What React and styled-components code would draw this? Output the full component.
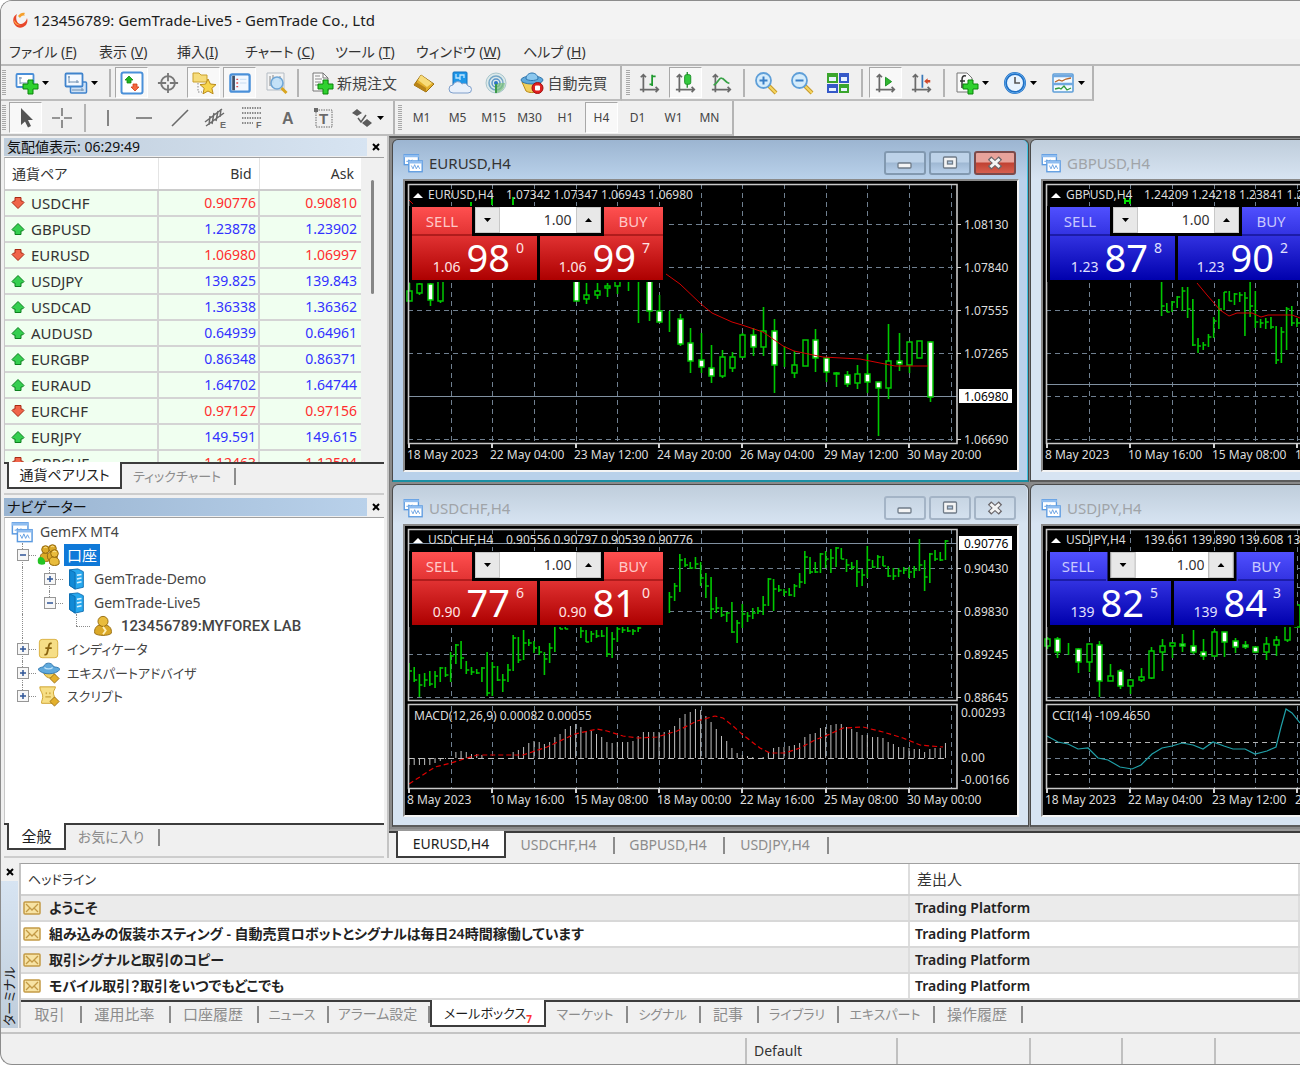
import React from 'react';
import styled, { createGlobalStyle } from 'styled-components';

const GlobalStyle = createGlobalStyle`
  *, *::before, *::after {
    box-sizing: border-box;
  }
  body {
    margin: 0;
    background: #fff;
    color: #333;
    font-family: 'Noto Sans', 'Noto Sans CJK JP', sans-serif;
    font-size: 14px;
    line-height: 20px;
    font-feature-settings: 'palt';
  }
  button, input {
    margin: 0;
    padding: 0;
    border: 0;
    background: none;
    color: inherit;
    font: inherit;
    font-feature-settings: inherit;
    white-space: nowrap;
  }
  svg {
    display: block;
    flex: none;
  }
`;

/* ---------- layout ---------- */

const AppWindow = styled.div`
  display: flex;
  flex-direction: column;
  min-height: 100vh;
  overflow: hidden;
  background: #f0f0f0;
  border: 1px solid #8c8c8c;
  border-right: 0;
  border-radius: 12px 0 0 12px;
`;

const TitleBar = styled.header`
  display: flex;
  align-items: center;
  gap: 4px;
  height: 38px;
  padding-left: 11px;
  background: #f3f3f3;
  color: #1c1c1c;
`;

const AppTitle = styled.h1`
  margin: 0;
  font-size: 15px;
  font-weight: 400;
`;

const MenuBar = styled.nav`
  display: flex;
  align-items: center;
  height: 27px;
  padding-left: 8px;
  border-bottom: 2px solid #b9b9b9;
`;

const MenuItem = styled.button`
  width: ${(p) => p.$w}px;
  text-align: left;
`;

const ToolRow = styled.div`
  display: flex;
  height: 35px;
`;

const ToolStrip = styled.div`
  display: flex;
  align-items: center;
  height: 35px;
  padding-left: ${(p) => p.$pad || 1}px;
  padding-right: ${(p) => p.$end || 0}px;
  border-right: 2px solid #b4b4b4;
  border-bottom: 2px solid #bdbdbd;
`;

const Grip = styled.span`
  width: 4px;
  height: 26px;
  margin-right: 2px;
  background: repeating-linear-gradient(#a8a8a8 0 1px, #f0f0f0 1px 2px);
`;

const Divider = styled.span`
  width: 2px;
  height: 28px;
  margin: 0 ${(p) => p.$m || 3}px;
  background: #b4b4b4;
`;

const ToolButton = styled.button`
  display: flex;
  align-items: center;
  justify-content: center;
  gap: 3px;
  width: ${(p) => (p.$w ? `${p.$w}px` : '33px')};
  height: 31px;
  margin: 0 2px 0 1px;
  color: #444;
  font-size: ${(p) => p.$size || 15}px;
  border: 1px solid;
  border-color: ${(p) => (p.$on ? '#a8a8a8 #fff #fff #a8a8a8' : 'transparent')};
  background: ${(p) => (p.$on ? '#f8f8f8' : 'transparent')};
`;

const Body = styled.main`
  display: flex;
`;

const Sidebar = styled.aside`
  display: flex;
  flex-direction: column;
  gap: 3px;
  flex: none;
  width: 388px;
  padding: 2px 3px 0 3px;
  border-right: 2px solid #c4c4c4;
`;

const Panel = styled.section`
  display: flex;
  flex-direction: column;
  flex: ${(p) => (p.$grow ? 1 : 'none')};
  padding-bottom: 3px;
  border-bottom: 2px solid #cdcdcd;
`;

const PanelHead = styled.div`
  display: flex;
  height: 19px;
`;

const PanelTitle = styled.h2`
  flex: 1;
  margin: 0;
  padding-left: 3px;
  height: 18px;
  font-size: 14px;
  font-weight: 400;
  line-height: 18px;
  color: #111;
  background: ${(p) =>
    p.$active
      ? 'linear-gradient(90deg, #99b4d1, #b9d1ea)'
      : 'linear-gradient(90deg, #bfcddb, #d7e4f2)'};
`;

const CloseButton = styled.button`
  display: flex;
  align-items: center;
  justify-content: center;
  width: 17px;
  height: 18px;
`;

/* ---------- market watch ---------- */

const WatchView = styled.div`
  display: flex;
  height: 305px;
  overflow: hidden;
  border-top: 1px solid #a0a0a0;
  border-left: 1px solid #c8c8c8;
`;

const WatchTable = styled.table`
  width: 356px;
  table-layout: fixed;
  border-collapse: collapse;
  font-size: 15px;
`;

const WatchHead = styled.th`
  width: ${(p) => (p.$w ? `${p.$w}px` : 'auto')};
  height: 32px;
  padding: 0 7px;
  background: #fff;
  border-right: 1px solid #e4e4e4;
  border-bottom: 2px solid #ccc;
  font-size: 14px;
  font-weight: 400;
  text-align: ${(p) => (p.$right ? 'right' : 'left')};
  &:last-child {
    border-right: 0;
  }
`;

const Pair = styled.td`
  height: 26px;
  padding: 0 0 0 6px;
  background: #f0fff0;
  border-right: 2px solid #d4d4d4;
  border-bottom: 2px solid #d4d4d4;
`;

const PairLabel = styled.span`
  display: flex;
  align-items: center;
  gap: 6px;
`;

const Quote = styled(Pair)`
  padding: 0 2px;
  text-align: right;
  font-size: 14px;
  color: ${(p) => (p.$up ? '#3232ff' : '#ff2e2e')};
  &:last-child {
    padding-right: 4px;
    border-right: 0;
  }
`;

const ScrollTrack = styled.div`
  flex: 1;
  display: flex;
  justify-content: center;
  padding-top: 22px;
`;

const ScrollThumb = styled.div`
  width: 3px;
  height: 114px;
  border-radius: 2px;
  background: #868686;
`;

/* ---------- tabs ---------- */

const TabBar = styled.div`
  display: flex;
  height: ${(p) => p.$h || 28}px;
  padding-left: ${(p) => p.$pad || 0}px;
  border-top: 2px solid #3c3c3c;
`;

const Tab = styled.button`
  position: relative;
  display: flex;
  align-items: center;
  justify-content: center;
  width: ${(p) => p.$w}px;
  height: 23px;
  padding-right: 4px;
  font-size: ${(p) => p.$size || 14}px;
  color: #8c8c8c;
  &::after {
    content: '';
    position: absolute;
    right: 0;
    top: 4px;
    height: 17px;
    border-right: 2px solid #8c8c8c;
  }
`;

const ActiveTab = styled(Tab)`
  height: 27px;
  margin-top: -2px;
  padding-right: 0;
  color: #1c1c1c;
  background: #fff;
  border: solid #3c3c3c;
  border-width: 0 2px 2px 2px;
  &::after {
    display: none;
  }
`;

const Badge = styled.sub`
  align-self: flex-end;
  font-size: 10px;
  font-weight: 700;
  line-height: 12px;
  color: #f33;
`;

/* ---------- navigator ---------- */

const TreeView = styled.div`
  flex: 1;
  padding: 2px 0 0 4px;
  background: #fff;
  border-top: 1px solid #a0a0a0;
  border-left: 1px solid #c8c8c8;
`;

const TreeList = styled.ul`
  display: grid;
  grid-auto-rows: 1fr;
  height: 188px;
  margin: 0;
  padding: 0;
  list-style: none;
`;

const TreeRow = styled.li`
  display: flex;
  align-items: stretch;
`;

const Guide = styled.span`
  position: relative;
  display: flex;
  align-items: center;
  justify-content: center;
  width: 27px;
  &::before {
    content: '';
    position: absolute;
    left: 13px;
    top: 0;
    bottom: ${(p) => (p.$end ? '50%' : '0')};
    border-left: 1px dotted ${(p) => (p.$line ? '#8c8c8c' : 'transparent')};
  }
  &::after {
    content: '';
    position: absolute;
    left: 13px;
    right: 0;
    top: 50%;
    border-top: 1px dotted ${(p) => (p.$branch ? '#8c8c8c' : 'transparent')};
  }
`;

const Expander = styled.button`
  position: relative;
  z-index: 1;
  display: flex;
  align-items: center;
  justify-content: center;
  width: 12px;
  height: 12px;
  background: #f7f7f7;
  border: 1px solid #969696;
`;

const TreeIcon = styled.span`
  display: flex;
  align-items: center;
  justify-content: center;
  width: 26px;
  margin-right: 2px;
`;

const TreeLabel = styled.span`
  align-self: center;
  padding: 0 3px;
  font-size: ${(p) => p.$size || 14}px;
  line-height: 22px;
  color: ${(p) => (p.$on ? '#fff' : '#444')};
  background: ${(p) => (p.$on ? '#0f79d8' : 'transparent')};
`;

const LoginLabel = styled(TreeLabel)`
  font-family: Roboto, sans-serif;
  font-size: 15px;
  font-weight: 500;
`;

/* ---------- chart windows ---------- */

const Workspace = styled.section`
  flex: 1;
  min-width: 0;
  display: flex;
  flex-direction: column;
`;

const Desktop = styled.div`
  display: grid;
  grid-template-columns: 637px 637px;
  grid-template-rows: 343px 343px;
  gap: 2px 1px;
  height: 695px;
  padding: 1px 0 0 2px;
  overflow: hidden;
  background: #8a8a8a;
  border-top: 2px solid #555;
  border-left: 1px solid #777;
  border-bottom: 2px solid #999;
`;

const ChartFrame = styled.article`
  display: flex;
  flex-direction: column;
  padding: 0 9px 0 10px;
  border: 1px solid #4a4a4a;
  border-bottom: 2px solid ${(p) => (p.$active ? '#1b8fa3' : '#5c5c5c')};
  border-radius: 6px 6px 0 0;
  background: ${(p) =>
    p.$active
      ? 'linear-gradient(#9cb5d1, #b9d1ea 39px)'
      : 'linear-gradient(#bfcddb, #d7e4f2 39px)'};
  box-shadow: inset -1px 0 ${(p) => (p.$active ? '#3fc4e0' : '#d7e4f2')};
`;

const ChartHead = styled.header`
  display: flex;
  align-items: center;
  gap: 3px;
  height: 39px;
  padding: 7px 3px 0 0;
`;

const ChartTitle = styled.h2`
  flex: 1;
  margin: 0 0 0 3px;
  font-size: 15px;
  font-weight: 400;
  color: ${(p) => (p.$active ? '#333' : '#a0a4a8')};
`;

const FrameButton = styled.button`
  display: flex;
  align-items: center;
  justify-content: center;
  width: 42px;
  height: 24px;
  border: 2px solid ${(p) => (p.$close ? '#7c4a4a' : p.$active ? '#8299b0' : '#a4b4c6')};
  border-radius: 3px;
  background: ${(p) =>
    p.$close
      ? 'linear-gradient(#e8a39b 0 45%, #c04132 50%, #d6604f)'
      : p.$active
        ? 'linear-gradient(#bdd2e8 0 45%, #9fb8d3 50%, #b7cfe9)'
        : 'transparent'};
`;

const Plot = styled.div`
  position: relative;
  border: 2px solid;
  border-color: #8a8a8a #f4f4f4 #f4f4f4 #8a8a8a;
  background: #000;
`;

const ChartSvg = styled.svg`
  width: 612px;
  height: 289px;
  font-family: 'Noto Sans', sans-serif;
  font-size: 12px;
  fill: #dcdcdc;
`;

const TradePanel = styled.div`
  position: absolute;
  left: 4px;
  top: 25px;
  display: grid;
  grid-template-columns: ${(p) => (p.$narrow ? '121px 120px' : '125px 123px')};
  gap: 3px;
  padding: 1px 3px 2px;
  background: #000;
`;

const redFill = 'linear-gradient(#ff5050, #e23333 38%, #ad0000)';
const blueFill = 'linear-gradient(#5050ff, #3333e2 38%, #0000ad)';

const DealButton = styled.button`
  display: flex;
  flex-direction: column;
  align-items: ${(p) => (p.$buy ? 'flex-end' : 'flex-start')};
  height: 73px;
  color: #fff;
  background: ${(p) => (p.$blue ? blueFill : redFill)};
`;

const DealSide = styled.span`
  width: ${(p) => (p.$narrow ? 56 : 60)}px;
  height: 29px;
  font-size: 15px;
  line-height: 28px;
  text-align: center;
  color: ${(p) => (p.$blue ? '#c8c8ff' : '#ffc8c8')};
  border-bottom: 2px solid ${(p) => (p.$blue ? '#1c1ca8' : '#b01c1c')};
`;

const DealPrice = styled.span`
  align-self: flex-end;
  display: flex;
  align-items: baseline;
  gap: 6px;
  padding-right: 13px;
  font-size: 14px;
  line-height: 42px;
  color: ${(p) => (p.$blue ? '#e0e0ff' : '#ffe4e4')};
`;

const BigDigits = styled.span`
  font-size: 38px;
  color: #fff;
`;

const Pip = styled.span`
  align-self: flex-start;
  line-height: 24px;
`;

const Volume = styled.div`
  position: absolute;
  top: 0;
  left: 50%;
  transform: translateX(-50%);
  display: flex;
  height: 30px;
  padding: 1px 3px 3px;
  background: #000;
`;

const Spin = styled.button`
  width: 25px;
  color: #111;
  background: #e8e8e8;
  border: 1px solid #c8c8c8;
  display: flex;
  align-items: center;
  justify-content: center;
`;

const VolumeInput = styled.input`
  width: ${(p) => (p.$narrow ? 73 : 76)}px;
  padding-right: 4px;
  background: #fff;
  color: #333;
  text-align: right;
`;

/* ---------- terminal ---------- */

const Terminal = styled.section`
  display: flex;
  margin-top: 5px;
  border-bottom: 2px solid #c4c4c4;
  padding-bottom: 4px;
`;

const TerminalSide = styled.div`
  display: flex;
  flex-direction: column;
  flex: none;
  width: 18px;
`;

const SideTitle = styled.h2`
  display: flex;
  align-items: center;
  flex: 1;
  width: 17px;
  margin: 0;
  padding-top: 2px;
  writing-mode: vertical-rl;
  text-orientation: sideways;
  transform: rotate(180deg);
  font-size: 13px;
  font-weight: 400;
  line-height: 17px;
  color: #222;
  background: linear-gradient(#bfcddb, #d7e4f2);
`;

const TerminalMain = styled.div`
  flex: 1;
  min-width: 0;
  border-top: 1px solid #a0a0a0;
  border-left: 2px solid #c4c4c4;
`;

const MailTable = styled.table`
  width: 100%;
  table-layout: fixed;
  border-collapse: collapse;
`;

const MailHead = styled.th`
  width: ${(p) => (p.$w ? p.$w : 'auto')};
  height: 31px;
  padding: 0 7px;
  background: #fff;
  border-right: 2px solid #ddd;
  border-bottom: 2px solid #d0d0d0;
  font-size: ${(p) => p.$size}px;
  font-weight: 400;
  text-align: left;
`;

const MailRow = styled.tr`
  background: ${(p) => (p.$odd ? '#fff' : '#ebebeb')};
`;

const MailCell = styled.td`
  height: 26px;
  padding: 0 0 0 ${(p) => p.$pad}px;
  border-right: 2px solid #ddd;
  border-bottom: 2px solid #d8d8d8;
  font-weight: 600;
  color: #222;
  white-space: nowrap;
`;

const Subject = styled.span`
  display: flex;
  align-items: center;
  gap: 8px;
`;

const StatusBar = styled.footer`
  display: flex;
  flex: 1;
  min-height: 29px;
  padding-top: 4px;
`;

const StatusCell = styled.span`
  flex: ${(p) => (p.$w ? `0 0 ${p.$w}` : 1)};
  padding: 3px 7px;
  border-right: ${(p) => (p.$w ? '2px solid #c0c0c0' : '0')};
`;

/* ---------- icons ---------- */

const Icon = ({ size = 24, children }) => (
  <svg width={size} height={size} viewBox="0 0 24 24" fill="none" aria-hidden="true">
    {children}
  </svg>
);

const Caret = () => (
  <svg width="7" height="4" viewBox="0 0 7 4" aria-hidden="true">
    <path d="M0 0h7L3.500 4z" fill="#000" />
  </svg>
);

const CrossMark = () => (
  <svg width="8" height="8" viewBox="0 0 8 8" aria-hidden="true">
    <path d="M1 1l6 6M7 1L1 7" stroke="#000" strokeWidth="2" />
  </svg>
);

const Plus = () => (
  <path
    d="M13 9h5v4h5v5h-5v5h-5v-5H8v-5h5z"
    fill="#2fd12f"
    stroke="#0b850b"
    strokeWidth="1"
  />
);

const LogoIcon = () => (
  <svg width="17" height="17" viewBox="0 0 17 17" aria-hidden="true">
    <path d="M5 2C1 4 0 9 3 13c3 4 8 3 11 0 1-2 2-4 1-7-1 4-4 6-7 6C5 11 3 7 5 2z" fill="#e8472b" />
    <path d="M6 4c2-3 5-4 7-3-1 1-1 2 0 3-2-1-4 0-5 2z" fill="#f6a02c" />
    <path d="M2 8c0 4 4 6 7 5-3 0-5-2-7-5z" fill="#ffb347" />
  </svg>
);

const WindowsIcon = ({ size = 20 }) => (
  <Icon size={size}>
    <rect x="1.500" y="2" width="17" height="12" fill="#fff" stroke="#5b9ae0" strokeWidth="1.600" />
    <path d="M1 3.500h18" stroke="#8fbdf0" strokeWidth="3" />
    <path d="M4 10h2l1-2 2 3 2-3" stroke="#5b9ae0" />
    <rect x="7" y="9.500" width="16" height="13" fill="#fff" stroke="#5b9ae0" strokeWidth="1.600" />
    <path d="M7 11h16" stroke="#8fbdf0" strokeWidth="3" />
    <path d="M10 15l2 4 2-5 2 5 2-4 2 4" stroke="#5b9ae0" />
  </Icon>
);

const NewChartIcon = () => (
  <Icon>
    <rect x="1.500" y="3" width="17" height="13" rx="1" fill="#fff" stroke="#4a8fd8" strokeWidth="1.800" />
    <path d="M5 6v7M4 7h3M5 12h9l-2-1.500" stroke="#6f8fb0" />
    <Plus />
  </Icon>
);

const ProfilesIcon = () => (
  <Icon>
    <rect x="6.500" y="11" width="16" height="11" rx="1" fill="#cfe2f6" stroke="#3f83cc" strokeWidth="1.500" />
    <rect x="1.500" y="2.500" width="17" height="13" rx="1" fill="#f4f9ff" stroke="#3f83cc" strokeWidth="1.800" />
    <path d="M5 5v7M4 6h2M5 11h10M13 9v3" stroke="#6f8fb0" />
    <path d="M8 19h12M18 17v3" stroke="#6f8fb0" />
  </Icon>
);

const WatchIcon = () => (
  <Icon>
    <rect x="1.500" y="1.500" width="21" height="21" rx="2" fill="#fff" stroke="#4a90d9" strokeWidth="2" />
    <path d="M9 5l4 4h-2v3H7V9H5z" fill="#21b321" stroke="#118a11" strokeWidth=".8" />
    <path d="M15 20l-4-4h2v-3h4v3h2z" fill="#f4683f" stroke="#d23a14" strokeWidth=".8" />
  </Icon>
);

const TargetIcon = () => (
  <Icon size={22}>
    <circle cx="12" cy="12" r="7.500" stroke="#777" strokeWidth="2" />
    <path d="M12 1v9M12 14v9M1 12h9M14 12h9" stroke="#777" strokeWidth="2" />
  </Icon>
);

const StarFolderIcon = () => (
  <Icon>
    <path d="M1 2h6l2 2h6v7H1z" fill="#f6dc7c" stroke="#c9a02c" />
    <path d="M6 12v9h4" stroke="#888" strokeDasharray="1.500 1.500" />
    <path d="M16 8l2.400 5 5.600.6-4.100 3.700 1.200 5.500L16 20l-5 2.800 1.200-5.500L8 13.600l5.600-.6z" fill="#f7d54d" stroke="#b98a18" />
  </Icon>
);

const PanelIcon = () => (
  <Icon size={22}>
    <rect x="1.500" y="2.500" width="21" height="19" rx="2" fill="#f2f8ff" stroke="#4a90d9" strokeWidth="2.500" />
    <path d="M5 4v16" stroke="#3f4f66" strokeWidth="3" />
    <path d="M8 8h2M8 12h2M8 16h2" stroke="#e05050" strokeWidth="1.500" />
    <path d="M12 8h7M12 12h7" stroke="#c5daf0" />
  </Icon>
);

const TesterIcon = () => (
  <Icon>
    <path d="M3 2h17v17H3z" fill="#f4f4f4" stroke="#b4bcc4" />
    <path d="M6 5v10M9 4v8M16 5v6" stroke="#888" />
    <circle cx="13" cy="12" r="6" fill="#bfe0f8" fillOpacity=".9" stroke="#6fa6d6" strokeWidth="1.600" />
    <path d="M17.500 17l5 5" stroke="#d9a520" strokeWidth="3" />
  </Icon>
);

const OrderIcon = () => (
  <Icon>
    <path d="M3 2h10l5 5v13H3z" fill="#fafafa" stroke="#777" />
    <path d="M13 2v5h5" stroke="#777" />
    <path d="M5 5h5M5 8h7M5 11h6M5 14h4" stroke="#888" />
    <Plus />
  </Icon>
);

const GoldIcon = () => (
  <Icon>
    <path d="M9 4l13 9-8 8L2 14z" fill="#e3b02c" stroke="#9c6f10" />
    <path d="M9 4l11 8-5 4L6 9z" fill="#f8dc7a" />
    <path d="M2 14l12 7v-4L4 11z" fill="#b98418" />
  </Icon>
);

const CloudIcon = () => (
  <Icon>
    <rect x="5" y="1" width="14" height="16" rx="1" fill="#1f97e8" stroke="#1471bd" />
    <path d="M8 3v4h4M12 9V4h4v3" stroke="#bfe6ff" strokeWidth="1.300" />
    <path d="M5 22a4 4 0 010-8 5 5 0 019-1 4 4 0 016 2 3.500 3.500 0 010 7z" fill="#e9f0fa" stroke="#7f9fcb" />
  </Icon>
);

const SignalIcon = () => (
  <Icon>
    <circle cx="12" cy="12" r="10" fill="#dce9ea" stroke="#a9c6cc" />
    <circle cx="12" cy="12" r="7" stroke="#74a6c6" strokeWidth="1.500" />
    <circle cx="12" cy="12" r="4" stroke="#5c96cc" strokeWidth="1.500" />
    <path d="M12 12v10a10 10 0 009-10z" fill="#7cc07c" fillOpacity=".7" />
    <circle cx="12" cy="12" r="2" fill="#2d74c4" />
    <path d="M12 13v9" stroke="#3d9a4a" strokeWidth="2" />
  </Icon>
);

const RobotIcon = () => (
  <Icon>
    <path d="M2 11l4 9c3 2 8 2 11 0l4-9z" fill="#f2cf5c" stroke="#b98a18" />
    <ellipse cx="12" cy="9" rx="11" ry="4" fill="#5fa9dc" stroke="#2f75ad" />
    <path d="M6 8c0-8 12-8 12 0-3 2-9 2-12 0z" fill="#8cc8ee" stroke="#2f75ad" />
    <circle cx="17.500" cy="17" r="5.500" fill="#e02020" stroke="#a01010" />
    <rect x="15" y="14.500" width="5" height="5" rx="1" fill="#fff" />
  </Icon>
);

const Axes = () => (
  <path d="M5 3v20M1 20h21M2 6l3-3 3 3M19 17l3 3-3 3" stroke="#6a6a6a" strokeWidth="2" />
);

const BarsIcon = () => (
  <Icon size={21}>
    <Axes />
    <path d="M15 3v13M15 5h4M12 14h3" stroke="#1f9a2f" strokeWidth="2" />
  </Icon>
);

const CandleIcon = () => (
  <Icon size={21}>
    <Axes />
    <path d="M14 0v18" stroke="#1f8a2a" strokeWidth="1.500" />
    <rect x="11" y="3" width="7" height="11" rx="2" fill="#35c93f" stroke="#148a20" />
  </Icon>
);

const LineIcon = () => (
  <Icon size={21}>
    <Axes />
    <path d="M3 15c5-2 6-9 9-8 3 0 4 5 9 6" stroke="#3aa348" strokeWidth="2" />
  </Icon>
);

const ZoomIcon = ({ plus }) => (
  <Icon>
    <path d="M15 15l7 7" stroke="#c79a2a" strokeWidth="4" />
    <path d="M15 15l7 7" stroke="#f6d661" strokeWidth="2" />
    <circle cx="9.500" cy="9.500" r="7.500" fill="#d5ecfb" stroke="#5f9fd8" strokeWidth="1.800" />
    <path d={plus ? 'M5.500 9.500h8M9.500 5.500v8' : 'M5.500 9.500h8'} stroke="#3a7fc6" strokeWidth="2" />
  </Icon>
);

const TileIcon = () => (
  <Icon>
    <path d="M1 2h11v10H1zM13 13h10v9H13z" fill="#3aa52c" />
    <path d="M13 2h10v10H13zM1 13h11v9H1z" fill="#3558c8" />
    <path d="M3 6h7v4H3zM15 6h6v4h-6zM3 17h7v3H3zM15 17h6v3h-6z" fill="#e8f2ff" />
  </Icon>
);

const ScrollIcon = () => (
  <Icon size={21}>
    <Axes />
    <path d="M12 6l7 5-7 5z" fill="#2fb62f" stroke="#168a20" />
  </Icon>
);

const ShiftIcon = () => (
  <Icon size={21}>
    <Axes />
    <path d="M13 3v15" stroke="#3a78b8" strokeWidth="2" />
    <path d="M15 10.500l4-3.500v2h3v3h-3v2z" fill="#d0482a" />
  </Icon>
);

const IndicatorIcon = () => (
  <Icon>
    <path d="M2 2h10l5 5v14H2z" fill="#fafafa" stroke="#777" />
    <path d="M11 5c-3-1-4 1-4 4v8M5 10h5" stroke="#333" strokeWidth="1.500" />
    <Plus />
  </Icon>
);

const ClockIcon = () => (
  <Icon>
    <circle cx="12" cy="12" r="9.500" fill="#e8f4ff" stroke="#1f6fc4" strokeWidth="3" />
    <circle cx="12" cy="12" r="10" stroke="#5fa8ea" strokeWidth="1" />
    <path d="M12 6v6h5" stroke="#555" strokeWidth="1.600" />
  </Icon>
);

const TemplateIcon = () => (
  <Icon>
    <rect x="2" y="3" width="20" height="18" rx="1" fill="#f4faff" stroke="#5f9fd8" strokeWidth="1.600" />
    <path d="M2 5h20M2 13h20" stroke="#6fa8e0" strokeWidth="2.500" />
    <path d="M4 11l4-2 3 1 4-2 5-1" stroke="#b8652a" strokeWidth="1.300" />
    <path d="M4 18l4-1 2 1 3-3 3 4 4-2" stroke="#2f9a3a" strokeWidth="1.300" />
  </Icon>
);

const PointerIcon = () => (
  <Icon>
    <path d="M7 2v17l4-3.500 3 6 3-1.500-3-6h5z" fill="#555" />
  </Icon>
);

const CrosshairIcon = () => (
  <Icon>
    <path d="M12 2v8M12 14v8M2 12h8M14 12h8" stroke="#777" strokeWidth="1.600" />
  </Icon>
);

const StrokeIcon = ({ d }) => (
  <Icon>
    <path d={d} stroke="#6a6a6a" strokeWidth="1.600" />
  </Icon>
);

const ToolLetter = styled.text`
  font-family: 'Liberation Sans', sans-serif;
  font-weight: 700;
  font-size: ${(p) => p.$size}px;
  fill: #6a6a6a;
`;

const ChannelIcon = () => (
  <Icon>
    <path d="M1 16L18 3M2 20L20 7M6 10l-1 9M10 7l-2 11M14 5l-2 10M17 3l-1 8" stroke="#6a6a6a" strokeWidth="1.500" />
    <ToolLetter x="16" y="22" $size={9}>E</ToolLetter>
  </Icon>
);

const FiboIcon = () => (
  <Icon>
    <path d="M2 2h20M2 7h20M2 12h20M2 17h11" stroke="#6a6a6a" strokeWidth="1.500" strokeDasharray="1.500 1" />
    <ToolLetter x="16" y="22" $size={9}>F</ToolLetter>
  </Icon>
);

const TextIcon = () => (
  <Icon>
    <ToolLetter x="6" y="18" $size={16}>A</ToolLetter>
  </Icon>
);

const LabelIcon = () => (
  <Icon>
    <rect x="4" y="4" width="16" height="17" stroke="#6a6a6a" strokeDasharray="1.500 1" />
    <path d="M2 2h4v4H2z" fill="#6a6a6a" />
    <ToolLetter x="7" y="18" $size={15}>T</ToolLetter>
  </Icon>
);

const ArrowsIcon = () => (
  <Icon>
    <path d="M7 3l5 4-5 3-5-3zM17 13l5 4-5 4-5-4z" fill="#5c5c5c" />
    <path d="M8 12l3 4 5-7" stroke="#5c5c5c" strokeWidth="1.500" />
  </Icon>
);

const TrendArrow = ({ up }) => (
  <svg width="14" height="14" viewBox="0 0 14 14" aria-hidden="true">
    {up ? (
      <path d="M7 1.500l6 6-1.500 1.500H10v3.500H4V9H2.500L1 7.500z" fill="#35cf50" stroke="#0c7f1e" />
    ) : (
      <path d="M7 12.500l6-6L11.500 5H10V1.500H4V5H2.500L1 6.500z" fill="#f0654a" stroke="#a82a14" />
    )}
  </svg>
);

const MailIcon = () => (
  <svg width="18" height="14" viewBox="0 0 18 14" aria-hidden="true">
    <rect x="1" y="1" width="16" height="12" rx="1" fill="#f7e3a4" stroke="#c39a45" strokeWidth="1.500" />
    <path d="M3 3l6 6 6-6M3 11l4-4M15 11l-4-4" fill="none" stroke="#c39a45" strokeWidth="1.300" />
  </svg>
);

const PersonShape = ({ x = 0, y = 0, fill = '#dba928' }) => (
  <g transform={`translate(${x} ${y})`}>
    <path d="M4 16c-2-5 1-7 3-7 4 0 7 2 6 7-2 2-7 2-9 0z" fill={fill} stroke="#94690c" />
    <circle cx="8.500" cy="5.500" r="3.800" fill={fill} stroke="#94690c" />
    <path d="M7 4c1-1 2-1 3 0" stroke="#ffeaa0" />
  </g>
);

const AccountsIcon = () => (
  <Icon>
    <PersonShape x={0} y={1} />
    <path d="M1 20c-1-5 1-6 3-6s5 3 4 7c-2 1-6 1-7-1z" fill="#24c324" />
    <PersonShape x={7} y={0} />
    <PersonShape x={9} y={5} fill="#e9bc3c" />
  </Icon>
);

const PersonIcon = () => (
  <Icon size={22}>
    <path d="M3 20c-1-5 2-9 6-9h5c5 0 8 4 7 9-3 3-15 3-18 0z" fill="#dba928" stroke="#94690c" />
    <circle cx="12" cy="7" r="5.500" fill="#e9bc3c" stroke="#94690c" />
    <path d="M12 13l3 4-3 4" stroke="#fff0b8" strokeWidth="2" />
  </Icon>
);

const ServerIcon = () => (
  <Icon size={22}>
    <path d="M5 2l9-1 6 3v17l-9 2-6-4z" fill="#27a8ee" stroke="#0c6cb0" />
    <path d="M5 2l6 3v18l-6-4z" fill="#118ad6" stroke="#0c6cb0" />
    <path d="M13 8l5-1M13 12l5-1M13 16l5-1" stroke="#d8f2ff" strokeWidth="1.600" />
  </Icon>
);

const FunctionIcon = () => (
  <Icon size={22}>
    <rect x="1.500" y="1.500" width="20" height="20" rx="3" fill="#f6de86" stroke="#d9ae3a" />
    <path d="M15 6c-3-1-3 2-4 6s-1 7-4 6M8 11h7" stroke="#8a6410" strokeWidth="2" />
  </Icon>
);

const ExpertIcon = () => (
  <Icon size={22}>
    <path d="M6 11c1 6 9 9 13 4l-3-5z" fill="#f2cf5c" stroke="#b98a18" />
    <path d="M0 8c3-3 5-2 6-3 2-5 9-5 11 0 2 1 5 0 7 3-4 6-19 7-24 0z" fill="#5fa9dc" stroke="#2f75ad" />
    <path d="M7 6c2 2 7 2 9 0" stroke="#bfe2f8" strokeWidth="1.500" />
    <path d="M18 13l5 5-5 5-5-5z" fill="#e3b02c" stroke="#9c6f10" />
  </Icon>
);

const ScriptIcon = () => (
  <Icon size={22}>
    <path d="M2 2h17c0 3-3 4-2 8 1 3 2 5 1 10H4c-1-2 2-5 1-9S2 6 2 2z" fill="#f7df86" stroke="#cda02a" />
    <path d="M9 8v2M13 8v2M8 13h6" stroke="#b88b20" />
    <path d="M18 13l5 5-5 5-5-5z" fill="#e3b02c" stroke="#9c6f10" />
  </Icon>
);

const MinimizeIcon = () => (
  <svg width="16" height="14" viewBox="0 0 16 14" aria-hidden="true">
    <rect x="1" y="7" width="13" height="5" rx="1" fill="#f4f4f4" stroke="#6f7b88" strokeWidth="1.300" />
  </svg>
);

const MaximizeIcon = () => (
  <svg width="16" height="14" viewBox="0 0 16 14" aria-hidden="true">
    <rect x="1.500" y="1" width="13" height="11" rx="1" fill="#f4f4f4" stroke="#6f7b88" strokeWidth="1.300" />
    <rect x="5.500" y="5" width="5" height="3" fill="#b7cfe9" stroke="#6f7b88" strokeWidth="1.300" />
  </svg>
);

const CloseFrameIcon = () => (
  <svg width="16" height="14" viewBox="0 0 16 14" aria-hidden="true">
    <path d="M2.500 2l11 10M13.500 2l-11 10" stroke="#6a666a" strokeWidth="5" />
    <path d="M3.500 3l9 8M12.500 3l-9 8" stroke="#f4f4f4" strokeWidth="3" />
  </svg>
);

/* ---------- chart data ---------- */

// [index, high, body top, body bottom, low, filled]
const eurusdCandles = [
  [0, 102, 110, 120, 120, 0], [1, 102, 103, 112, 114, 0], [2, 102, 103, 119, 125, 1],
  [3, 95, 95, 120, 122, 0], [16, 100, 100, 120, 120, 1], [17, 102, 114, 118, 123, 0],
  [18, 102, 110, 114, 118, 0], [19, 102, 105, 107, 116, 0], [20, 98, 98, 105, 113, 0],
  [21, 98, 98, 98, 110, 0], [22, 98, 98, 98, 142, 0], [23, 98, 98, 130, 140, 1],
  [24, 114, 130, 141, 141, 1], [25, 130, 139, 139, 151, 1], [26, 133, 138, 163, 165, 1],
  [27, 147, 162, 180, 192, 1], [28, 152, 179, 186, 192, 1], [29, 164, 187, 195, 202, 1],
  [30, 169, 176, 195, 197, 0], [31, 171, 176, 187, 191, 0], [32, 152, 154, 176, 177, 0],
  [33, 147, 154, 166, 175, 1], [34, 126, 150, 166, 175, 0], [35, 138, 150, 184, 212, 1],
  [36, 165, 183, 183, 186, 1], [37, 170, 184, 192, 197, 0], [38, 159, 159, 185, 185, 0],
  [39, 148, 159, 177, 191, 1], [40, 177, 177, 191, 201, 1], [41, 191, 192, 193, 206, 1],
  [42, 190, 194, 203, 206, 1], [43, 184, 193, 202, 208, 0], [44, 173, 193, 201, 212, 1],
  [45, 201, 201, 207, 255, 1], [46, 143, 180, 207, 218, 0], [47, 152, 180, 183, 190, 1],
  [48, 161, 161, 184, 192, 0], [49, 160, 160, 177, 177, 0], [50, 160, 161, 216, 221, 1],
];

const usdjpyCandles = [
  [0, 111, 113, 120, 123, 0], [1, 111, 113, 126, 132, 1], [2, 117, 125, 125, 129, 1],
  [3, 122, 123, 136, 147, 1], [4, 118, 118, 136, 146, 0], [5, 115, 119, 155, 171, 1],
  [6, 138, 150, 155, 155, 0], [7, 143, 145, 160, 163, 1], [8, 153, 154, 160, 168, 0],
  [9, 142, 151, 154, 156, 0], [10, 121, 125, 152, 153, 0], [11, 113, 120, 126, 145, 0],
  [12, 116, 117, 120, 132, 0], [13, 108, 118, 120, 126, 1], [14, 104, 120, 126, 128, 1],
  [15, 113, 126, 130, 134, 1], [16, 103, 106, 130, 131, 0], [17, 106, 106, 116, 131, 1],
  [18, 112, 115, 121, 127, 1], [19, 115, 119, 121, 123, 1], [20, 121, 121, 126, 127, 1],
  [21, 111, 118, 126, 134, 0], [22, 110, 114, 119, 130, 0], [23, 95, 95, 114, 116, 0],
  [24, 79, 79, 101, 101, 0],
];

// [index, high, low, close]
const usdchfBars = [
  [0, 137, 154, 145], [1, 141, 156, 154], [2, 148, 171, 159], [3, 147, 161, 154],
  [4, 145, 160, 158], [5, 145, 162, 150], [6, 141, 156, 142], [7, 141, 151, 149],
  [8, 126, 156, 130], [9, 118, 138, 119], [10, 115, 143, 132], [11, 135, 148, 144],
  [12, 141, 149, 146], [13, 143, 148, 147], [14, 141, 156, 142], [15, 126, 170, 167],
  [16, 136, 170, 141], [17, 140, 155, 154], [18, 148, 166, 154], [19, 138, 156, 144],
  [20, 109, 145, 112], [21, 111, 137, 134], [22, 104, 134, 117], [23, 113, 120, 117],
  [24, 115, 127, 122], [25, 120, 129, 126], [26, 126, 149, 133], [27, 117, 137, 122],
  [28, 98, 126, 100], [29, 98, 103, 103], [30, 98, 103, 103], [33, 100, 112, 105],
  [34, 104, 116, 116], [35, 105, 116, 108], [36, 104, 112, 110], [37, 104, 111, 110],
  [38, 100, 131, 128], [39, 106, 132, 113], [40, 100, 116, 103], [41, 100, 107, 104],
  [42, 100, 106, 105], [43, 103, 109, 105], [44, 100, 106, 102], [50, 66, 87, 71],
  [51, 57, 75, 60], [52, 28, 66, 34], [53, 32, 41, 39], [54, 36, 43, 42],
  [55, 31, 43, 38], [56, 36, 60, 52], [57, 47, 72, 60], [58, 51, 93, 83],
  [59, 71, 87, 82], [60, 81, 91, 89], [61, 86, 96, 87], [62, 76, 107, 106],
  [63, 94, 117, 97], [64, 78, 102, 88], [65, 86, 96, 90], [66, 82, 93, 87],
  [67, 81, 88, 85], [68, 70, 89, 79], [69, 52, 80, 53], [70, 53, 85, 63],
  [71, 59, 66, 64], [72, 63, 70, 66], [73, 62, 70, 69], [74, 58, 71, 60],
  [75, 47, 62, 56], [76, 25, 58, 31], [77, 31, 48, 46], [78, 36, 47, 46],
  [79, 27, 47, 28], [80, 25, 42, 33], [81, 23, 47, 32], [82, 21, 41, 22],
  [83, 22, 33, 33], [84, 33, 46, 39], [85, 36, 44, 41], [86, 34, 61, 46],
  [87, 43, 60, 49], [88, 20, 52, 34], [89, 34, 42, 41], [90, 29, 42, 31],
  [91, 30, 40, 40], [92, 40, 51, 50], [93, 42, 54, 50], [94, 42, 51, 45],
  [95, 41, 48, 44], [96, 41, 52, 46], [97, 40, 52, 44], [98, 13, 45, 39],
  [99, 34, 65, 51], [100, 27, 57, 28], [101, 24, 35, 33], [102, 26, 35, 34],
  [103, 14, 34, 15],
];

const gbpusdBars = [
  [22, 98, 135, 125], [23, 122, 131, 131], [24, 120, 131, 121], [25, 115, 127, 116],
  [26, 106, 130, 110], [27, 106, 137, 128], [28, 118, 165, 164], [29, 157, 172, 165],
  [30, 161, 169, 164], [31, 153, 166, 156], [32, 136, 157, 140], [33, 118, 148, 128],
  [34, 111, 129, 111], [35, 110, 120, 120], [36, 112, 124, 113], [37, 111, 121, 114],
  [38, 111, 155, 117], [39, 98, 136, 125], [40, 110, 147, 141], [41, 138, 147, 142],
  [42, 137, 148, 141], [43, 136, 148, 146], [44, 145, 183, 179], [45, 146, 182, 151],
  [46, 126, 169, 128], [47, 125, 145, 142], [48, 137, 146, 142],
];

const macdValues = [
  -7, -7, -7, -7, -7, -5, -3, -1, 0, 6, 7, 6, 4, 4, 3, 0, 0, 0, 0, 0, 6, 8, 11, 15, 17, 16, 14,
  16, 21, 24, 29, 32, 34, 31, 27, 27, 24, 21, 16, 15, 16, 16, 16, 17, 22, 26, 26, 26, 26, 26, 28,
  32, 40, 44, 46, 49, 48, 42, 36, 29, 22, 17, 10, 5, 3, 2, 1, 0, 1, 6, 10, 11, 11, 12, 13, 15, 21,
  24, 25, 30, 31, 33, 34, 34, 31, 29, 26, 23, 23, 21, 21, 20, 16, 14, 11, 11, 10, 9, 9, 6, 9, 10,
  10, 15,
];

const STEP = 125 / 12;

const Candles = ({ data }) => (
  <g stroke="#00c800">
    {data.map(([i, high, top, bottom, low, filled]) => {
      const x = Math.round(4 + i * STEP);
      return (
        <g key={i}>
          <path d={`M${x + 0.5} ${high}V${top}M${x + 0.5} ${bottom}V${low}`} strokeWidth="1.600" />
          <rect
            x={x - 2}
            y={top}
            width="5"
            height={Math.max(bottom - top, 0)}
            strokeWidth="1.500"
            fill={filled ? '#fff' : '#000'}
          />
        </g>
      );
    })}
  </g>
);

const Bars = ({ data }) => (
  <path
    stroke="#00c800"
    strokeWidth="1.600"
    d={data
      .map(([i, high, low, close]) => {
        const x = 4 + (i * STEP) / 2;
        return `M${x} ${high}V${low}M${x} ${close}h3`;
      })
      .join('')}
  />
);

const gridColumns = Array.from({ length: 13 }, (_, i) => 4 + (i + 1) * 4 * STEP);

const Grid = ({ rows, split }) => (
  <g strokeWidth="1" stroke="#708090" strokeDasharray="5 4">
    {rows.map((y) => (
      <path key={y} d={`M3 ${y + 0.5}H552`} />
    ))}
    {gridColumns.map((x) => (
      <path key={x} d={`M${Math.round(x) + 0.5} 3V${split ? 174 : 262}`} />
    ))}
    {split && gridColumns.map((x) => <path key={x} d={`M${Math.round(x) + 0.5} 180V262`} />)}
  </g>
);

const Chart = ({ rows, labels, price, priceY, header, dates, split, sub, subLabels = [], children }) => (
  <ChartSvg viewBox="0 0 612 289" role="img" aria-label={header[0]}>
    <Grid rows={rows} split={split} />
    <path d={`M3 ${priceY + 0.5}H552`} stroke="#8090a0" />
    {children}
    <path
      d={split ? 'M3.500 3.500H552V174.500H3.500zM3.500 178.500H552V262.500H3.500z' : 'M3.500 3.500H552V262.500H3.500z'}
      fill="none"
      stroke="#c8c8c8"
      strokeWidth="1.600"
    />
    <path d="M8 17l5-5 5 5z" fill="#fff" />
    <text x="23" y="18">{header[0]}</text>
    <text x="101" y="18">{header[1]}</text>
    {sub && <text x="9" y="194">{sub}</text>}
    {labels.map(([text, y]) => (
      <g key={text}>
        <path d={`M552 ${y + 0.5}h4`} stroke="#d0d0d0" />
        <text x="559" y={y + 5}>{text}</text>
      </g>
    ))}
    {subLabels.map(([text, y]) => (
      <text key={text} x="556" y={y}>{text}</text>
    ))}
    <rect x="554" y={priceY - 7} width="53" height="14" fill="#fff" />
    <text x="559" y={priceY + 5} fill="#000">{price}</text>
    {dates.map((text, i) => (
      <g key={text}>
        <path d={`M${Math.round(4 + i * 8 * STEP)} 262v5`} stroke="#d0d0d0" strokeWidth="2" />
        <text x={Math.round(2 + i * 8 * STEP)} y="278">{text}</text>
      </g>
    ))}
  </ChartSvg>
);

const Deal = ({ side, quote, blue, narrow }) => (
  <DealButton $blue={blue} $buy={side === 'BUY'}>
    <DealSide $blue={blue} $narrow={narrow}>{side}</DealSide>
    <DealPrice $blue={blue}>
      <span>{quote[0]}</span>
      <BigDigits>{quote[1]}</BigDigits>
      <Pip>{quote[2]}</Pip>
    </DealPrice>
  </DealButton>
);

const ChartWindow = ({ title, active, sell, buy, blue, narrow, children }) => (
  <ChartFrame $active={active}>
    <ChartHead>
      <WindowsIcon />
      <ChartTitle $active={active}>{title}</ChartTitle>
      <FrameButton $active={active} aria-label="最小化"><MinimizeIcon /></FrameButton>
      <FrameButton $active={active} aria-label="最大化"><MaximizeIcon /></FrameButton>
      <FrameButton $active={active} $close={active} aria-label="閉じる"><CloseFrameIcon /></FrameButton>
    </ChartHead>
    <Plot>
      {children}
      <TradePanel $narrow={narrow}>
        <Deal side="SELL" quote={sell} blue={blue} narrow={narrow} />
        <Deal side="BUY" quote={buy} blue={blue} narrow={narrow} />
        <Volume>
          <Spin aria-label="減らす"><Caret /></Spin>
          <VolumeInput $narrow={narrow} defaultValue="1.00" aria-label={`${title} volume`} />
          <Spin aria-label="増やす">
            <svg width="7" height="4" viewBox="0 0 7 4" aria-hidden="true">
              <path d="M0 4h7L3.500 0z" fill="#000" />
            </svg>
          </Spin>
        </Volume>
      </TradePanel>
    </Plot>
  </ChartFrame>
);

/* ---------- page data ---------- */

const menus = [
  ['ファイル (', 'F', 90], ['表示 (', 'V', 78], ['挿入(', 'I', 68], ['チャート (', 'C', 90],
  ['ツール (', 'T', 81], ['ウィンドウ (', 'W', 107], ['ヘルプ (', 'H', 80],
];

const quotes = [
  ['USDCHF', '0.90776', '0.90810', false], ['GBPUSD', '1.23878', '1.23902', true],
  ['EURUSD', '1.06980', '1.06997', false], ['USDJPY', '139.825', '139.843', true],
  ['USDCAD', '1.36338', '1.36362', true], ['AUDUSD', '0.64939', '0.64961', true],
  ['EURGBP', '0.86348', '0.86371', true], ['EURAUD', '1.64702', '1.64744', true],
  ['EURCHF', '0.97127', '0.97156', false], ['EURJPY', '149.591', '149.615', true],
  ['GBPCHF', '1.12463', '1.12504', false],
];

const mails = [
  'ようこそ',
  '組み込みの仮装ホスティング - 自動売買ロボットとシグナルは毎日24時間稼働しています',
  '取引シグナルと取引のコピー',
  'モバイル取引？取引をいつでもどこでも',
];

const terminalTabs = [
  ['取引', 61, 15], ['運用比率', 89, 15], ['口座履歴', 88, 15], ['ニュース', 70, 13],
  ['アラーム設定', 101, 14], ['メールボックス', 116, 13], ['マーケット', 82, 13], ['シグナル', 73, 13],
  ['記事', 58, 15], ['ライブラリ', 80, 13], ['エキスパート', 96, 13], ['操作履歴', 88, 15],
];

const periods = ['M1', 'M5', 'M15', 'M30', 'H1', 'H4', 'D1', 'W1', 'MN'];

const MarketWatch = () => (
  <Panel>
    <PanelHead>
      <PanelTitle>気配値表示: 06:29:49</PanelTitle>
      <CloseButton aria-label="閉じる"><CrossMark /></CloseButton>
    </PanelHead>
    <WatchView>
      <WatchTable>
        <thead>
          <tr>
            <WatchHead $w={153}>通貨ペア</WatchHead>
            <WatchHead $w={101} $right>Bid</WatchHead>
            <WatchHead $right>Ask</WatchHead>
          </tr>
        </thead>
        <tbody>
          {quotes.map(([name, bid, ask, up]) => (
            <tr key={name}>
              <Pair><PairLabel><TrendArrow up={up} />{name}</PairLabel></Pair>
              <Quote $up={up}>{bid}</Quote>
              <Quote $up={up}>{ask}</Quote>
            </tr>
          ))}
        </tbody>
      </WatchTable>
      <ScrollTrack><ScrollThumb /></ScrollTrack>
    </WatchView>
    <TabBar $pad={3}>
      <ActiveTab $w={115}>通貨ペアリスト</ActiveTab>
      <Tab $w={114} $size={13}>ティックチャート</Tab>
    </TabBar>
  </Panel>
);

const Toggle = ({ open }) => (
  <Expander aria-label={open ? '折りたたむ' : '展開'}>
    <svg width="8" height="8" viewBox="0 0 8 8" aria-hidden="true">
      <path d={open ? 'M1 4h6' : 'M1 4h6M4 1v6'} stroke="#2f5597" strokeWidth="1.500" />
    </svg>
  </Expander>
);

const Navigator = () => (
  <Panel $grow>
    <PanelHead>
      <PanelTitle $active>ナビゲーター</PanelTitle>
      <CloseButton aria-label="閉じる"><CrossMark /></CloseButton>
    </PanelHead>
    <TreeView>
      <TreeList>
        <TreeRow>
          <TreeIcon><WindowsIcon size={22} /></TreeIcon>
          <TreeLabel>GemFX MT4</TreeLabel>
        </TreeRow>
        <TreeRow>
          <Guide $line $branch><Toggle open /></Guide>
          <TreeIcon><AccountsIcon /></TreeIcon>
          <TreeLabel $on $size={15}>口座</TreeLabel>
        </TreeRow>
        <TreeRow>
          <Guide $line />
          <Guide $line $branch><Toggle /></Guide>
          <TreeIcon><ServerIcon /></TreeIcon>
          <TreeLabel>GemTrade-Demo</TreeLabel>
        </TreeRow>
        <TreeRow>
          <Guide $line />
          <Guide $line $branch $end><Toggle open /></Guide>
          <TreeIcon><ServerIcon /></TreeIcon>
          <TreeLabel>GemTrade-Live5</TreeLabel>
        </TreeRow>
        <TreeRow>
          <Guide $line />
          <Guide />
          <Guide $line $branch $end />
          <TreeIcon><PersonIcon /></TreeIcon>
          <LoginLabel>123456789:MYFOREX LAB</LoginLabel>
        </TreeRow>
        <TreeRow>
          <Guide $line $branch><Toggle /></Guide>
          <TreeIcon><FunctionIcon /></TreeIcon>
          <TreeLabel $size={13}>インディケータ</TreeLabel>
        </TreeRow>
        <TreeRow>
          <Guide $line $branch><Toggle /></Guide>
          <TreeIcon><ExpertIcon /></TreeIcon>
          <TreeLabel $size={13}>エキスパートアドバイザ</TreeLabel>
        </TreeRow>
        <TreeRow>
          <Guide $line $branch $end><Toggle /></Guide>
          <TreeIcon><ScriptIcon /></TreeIcon>
          <TreeLabel $size={13}>スクリプト</TreeLabel>
        </TreeRow>
      </TreeList>
    </TreeView>
    <TabBar $pad={3} $h={30}>
      <ActiveTab $w={59} $size={15}>全般</ActiveTab>
      <Tab $w={94}>お気に入り</Tab>
    </TabBar>
  </Panel>
);

const Toolbars = () => (
  <>
    <ToolRow>
      <ToolStrip $end={5}>
        <Grip />
        <ToolButton $w={46} aria-label="新規チャート"><NewChartIcon /><Caret /></ToolButton>
        <ToolButton $w={46} aria-label="チャートの組表示"><ProfilesIcon /><Caret /></ToolButton>
        <Divider />
        <ToolButton $on aria-label="気配値表示"><WatchIcon /></ToolButton>
        <ToolButton aria-label="データウィンドウ"><TargetIcon /></ToolButton>
        <ToolButton $on aria-label="ナビゲーター"><StarFolderIcon /></ToolButton>
        <ToolButton $on aria-label="ターミナル"><PanelIcon /></ToolButton>
        <ToolButton aria-label="ストラテジーテスター"><TesterIcon /></ToolButton>
        <Divider />
        <ToolButton $w={101}><OrderIcon />新規注文</ToolButton>
        <ToolButton aria-label="メタエディター"><GoldIcon /></ToolButton>
        <ToolButton aria-label="クラウド"><CloudIcon /></ToolButton>
        <ToolButton aria-label="シグナル"><SignalIcon /></ToolButton>
        <ToolButton $w={98}><RobotIcon />自動売買</ToolButton>
      </ToolStrip>
      <ToolStrip $pad={4}>
        <Grip />
        <ToolButton aria-label="バーチャート"><BarsIcon /></ToolButton>
        <ToolButton $on aria-label="ローソク足"><CandleIcon /></ToolButton>
        <ToolButton aria-label="ラインチャート"><LineIcon /></ToolButton>
        <Divider />
        <ToolButton aria-label="拡大"><ZoomIcon plus /></ToolButton>
        <ToolButton aria-label="縮小"><ZoomIcon /></ToolButton>
        <ToolButton aria-label="整列"><TileIcon /></ToolButton>
        <Divider $m={5} />
        <ToolButton $on aria-label="自動スクロール"><ScrollIcon /></ToolButton>
        <ToolButton aria-label="チャートシフト"><ShiftIcon /></ToolButton>
        <Divider />
        <ToolButton $w={45} aria-label="インディケータリスト"><IndicatorIcon /><Caret /></ToolButton>
        <ToolButton $w={45} aria-label="時間足設定"><ClockIcon /><Caret /></ToolButton>
        <ToolButton $w={45} aria-label="定型チャート"><TemplateIcon /><Caret /></ToolButton>
      </ToolStrip>
    </ToolRow>
    <ToolRow>
      <ToolStrip>
        <Grip />
        <ToolButton $on aria-label="カーソル"><PointerIcon /></ToolButton>
        <ToolButton aria-label="クロスヘア"><CrosshairIcon /></ToolButton>
        <Divider $m={4} />
        <ToolButton aria-label="垂直線"><StrokeIcon d="M12 4v16" /></ToolButton>
        <ToolButton aria-label="水平線"><StrokeIcon d="M4 12h16" /></ToolButton>
        <ToolButton aria-label="トレンドライン"><StrokeIcon d="M4 20L20 4" /></ToolButton>
        <ToolButton aria-label="チャネル"><ChannelIcon /></ToolButton>
        <ToolButton aria-label="フィボナッチ"><FiboIcon /></ToolButton>
        <ToolButton aria-label="テキスト"><TextIcon /></ToolButton>
        <ToolButton aria-label="テキストラベル"><LabelIcon /></ToolButton>
        <ToolButton $w={48} aria-label="矢印"><ArrowsIcon /><Caret /></ToolButton>
      </ToolStrip>
      <ToolStrip $pad={3} $end={4}>
        <Grip />
        {periods.map((name) => (
          <ToolButton key={name} $size={12} $on={name === 'H4'}>{name}</ToolButton>
        ))}
      </ToolStrip>
    </ToolRow>
  </>
);

const Charts = () => (
  <Desktop>
    <ChartWindow title="EURUSD,H4" active sell={['1.06', '98', '0']} buy={['1.06', '99', '7']}>
      <Chart
        header={['EURUSD,H4', '1.07342 1.07347 1.06943 1.06980']}
        rows={[43, 86, 129, 172, 258]}
        labels={[['1.08130', 43], ['1.07840', 86], ['1.07555', 129], ['1.07265', 172], ['1.06690', 258]]}
        price="1.06980"
        priceY={215}
        dates={['18 May 2023', '22 May 04:00', '23 May 12:00', '24 May 20:00', '26 May 04:00', '29 May 12:00', '30 May 20:00']}
      >
        <path d="M66 21v4M87 17v7M108 16v8" stroke="#00c800" strokeWidth="2" />
        <Candles data={eurusdCandles} />
        <path
          d="M4 19l4 4M261 93l14 10 21 20 11 9 20 9 10 3 21 7 10 7 10 7 11 5 29 6 37 2 35 7h33"
          fill="none"
          stroke="#d40000"
        />
      </Chart>
    </ChartWindow>
    <ChartWindow title="GBPUSD,H4" blue sell={['1.23', '87', '8']} buy={['1.23', '90', '2']}>
      <Chart
        header={['GBPUSD,H4', '1.24209 1.24218 1.23841 1.23878']}
        rows={[43, 86, 129, 172, 215, 258]}
        labels={[['1.25240', 43], ['1.24830', 86], ['1.24420', 129], ['1.24010', 172], ['1.23190', 258]]}
        price="1.23878"
        priceY={203}
        dates={['8 May 2023', '10 May 16:00', '15 May 08:00', '18 May 00:00', '22 May 16:00', '25 May 08:00', '30 May 00:00']}
      >
        <path d="M4 44v9M82 17v6M87 17v6M82 20h5" stroke="#00e000" strokeWidth="2" />
        <Bars data={gbpusdBars} />
        <path
          d="M154 102l10 12 13 15 9 6 8-3h15l9 4 7-2h24l8 3"
          fill="none"
          stroke="#d40000"
        />
      </Chart>
    </ChartWindow>
    <ChartWindow title="USDCHF,H4" sell={['0.90', '77', '6']} buy={['0.90', '81', '0']}>
      <Chart
        header={['USDCHF,H4', '0.90556 0.90797 0.90539 0.90776']}
        rows={[42, 85, 128, 171]}
        labels={[['0.90430', 42], ['0.89830', 85], ['0.89245', 128], ['0.88645', 171]]}
        price="0.90776"
        priceY={17}
        split
        sub="MACD(12,26,9) 0.00082 0.00055"
        subLabels={[['0.00293', 191], ['0.00', 236], ['-0.00166', 258]]}
        dates={['8 May 2023', '10 May 16:00', '15 May 08:00', '18 May 00:00', '22 May 16:00', '25 May 08:00', '30 May 00:00']}
      >
        <Bars data={usdchfBars} />
        <path d="M3 232.500H540" stroke="#c0c0c0" strokeDasharray="6 4" />
        <path
          stroke="#c0c0c0"
          d={macdValues.map((v, i) => `M${4 + (i * STEP) / 2} 232v${-v}`).join('')}
        />
        <path
          d="M4 258L30 241 46 237 72 229H118L142 221 170 208 192 203 202 205 218 210 233 212 252 211 272 205 292 195 310 190 318 192 328 200 338 209 355 222 365 227H380L395 222 410 214 425 208 438 202 458 201 478 206 498 212 515 219 538 221"
          fill="none"
          stroke="#e00000"
          strokeWidth="1.200"
          strokeDasharray="5 3"
        />
      </Chart>
    </ChartWindow>
    <ChartWindow title="USDJPY,H4" blue narrow sell={['139', '82', '5']} buy={['139', '84', '3']}>
      <Chart
        header={['USDJPY,H4', '139.661 139.890 139.608 139.825']}
        rows={[42, 85, 128, 171]}
        labels={[['140.700', 42], ['139.900', 85], ['138.700', 128], ['137.700', 171]]}
        price="139.825"
        priceY={61}
        split
        sub="CCI(14) -109.4650"
        dates={['18 May 2023', '22 May 04:00', '23 May 12:00', '24 May 20:00', '26 May 04:00', '29 May 12:00', '30 May 20:00']}
      >
        <Candles data={usdjpyCandles} />
        <path d="M3 216.500H552M3 248.500H552" stroke="#b4b4b4" strokeDasharray="5 4" />
        <path d="M3 232.500H552" stroke="#708090" strokeDasharray="5 4" />
        <path
          d="M4 210L15 216 25 218 35 223 45 222 55 232 65 234 77 241 89 243 98 239 109 228 119 222 129 220 139 217 150 219 160 223 170 216 181 220 190 223H202L212 228 224 225 233 221 238 201 243 183 249 187 257 197"
          fill="none"
          stroke="#20a0a8"
          strokeWidth="1.200"
        />
      </Chart>
    </ChartWindow>
  </Desktop>
);

const App = () => {
  return (
    <>
      <GlobalStyle />
      <AppWindow>
        <TitleBar>
          <LogoIcon />
          <AppTitle>123456789: GemTrade-Live5 - GemTrade Co., Ltd</AppTitle>
        </TitleBar>
        <MenuBar>
          {menus.map(([text, key, w]) => (
            <MenuItem key={key} $w={w}>{text}<u>{key}</u>)</MenuItem>
          ))}
        </MenuBar>
        <Toolbars />
        <Body>
          <Sidebar>
            <MarketWatch />
            <Navigator />
          </Sidebar>
          <Workspace>
            <Charts />
            <TabBar $pad={7} $h={27}>
              <ActiveTab $w={110}>EURUSD,H4</ActiveTab>
              <Tab $w={109}>USDCHF,H4</Tab>
              <Tab $w={110}>GBPUSD,H4</Tab>
              <Tab $w={104}>USDJPY,H4</Tab>
            </TabBar>
          </Workspace>
        </Body>
        <Terminal>
          <TerminalSide>
            <CloseButton aria-label="閉じる"><CrossMark /></CloseButton>
            <SideTitle>ターミナル</SideTitle>
          </TerminalSide>
          <TerminalMain>
            <MailTable>
              <thead>
                <tr>
                  <MailHead $w="888px" $size={13}>ヘッドライン</MailHead>
                  <MailHead $size={15}>差出人</MailHead>
                </tr>
              </thead>
              <tbody>
                {mails.map((subject, i) => (
                  <MailRow key={subject} $odd={i % 2 === 1}>
                    <MailCell $pad={2}><Subject><MailIcon />{subject}</Subject></MailCell>
                    <MailCell $pad={5}>Trading Platform</MailCell>
                  </MailRow>
                ))}
              </tbody>
            </MailTable>
            <TabBar>
              {terminalTabs.map(([name, w, size]) =>
                name === 'メールボックス' ? (
                  <ActiveTab key={name} $w={w} $size={size}>{name}<Badge>7</Badge></ActiveTab>
                ) : (
                  <Tab key={name} $w={w} $size={size}>{name}</Tab>
                )
              )}
            </TabBar>
          </TerminalMain>
        </Terminal>
        <StatusBar>
          <StatusCell $w="746px" />
          <StatusCell $w="151px">Default</StatusCell>
          <StatusCell $w="133px" />
          <StatusCell $w="92px" />
          <StatusCell $w="93px" />
          <StatusCell />
        </StatusBar>
      </AppWindow>
    </>
  );
};

export default App;
